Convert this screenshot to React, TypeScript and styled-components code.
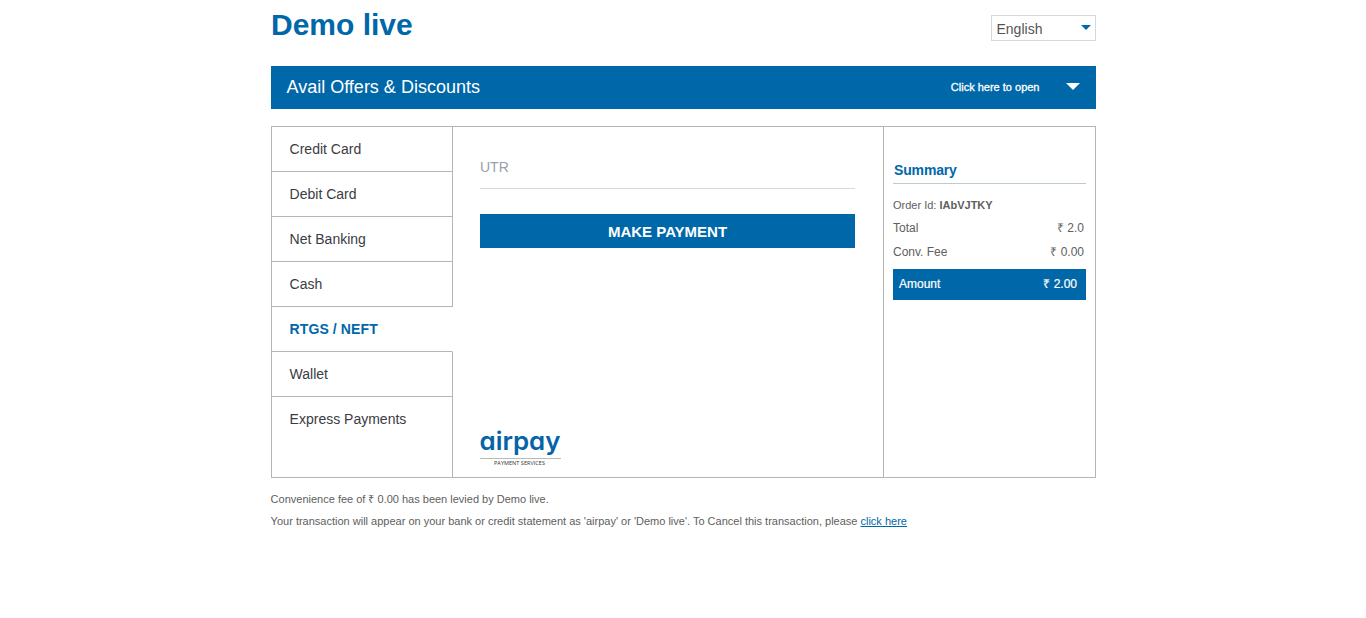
import React from "react";
import styled, { createGlobalStyle } from "styled-components";

const BLUE = "#0067a9";
const LINE = "#b5b5b5";

const Global = createGlobalStyle`
  *, *::before, *::after { box-sizing: border-box; }
  body { margin: 0; background: #fff; color: #606060; font-family: "Liberation Sans", Arial, sans-serif; }
`;

const Page = styled.main`
  width: 825px;
  margin-left: 271px;
`;

const Header = styled.header`
  display: flex;
  justify-content: space-between;
  align-items: flex-start;
  height: 66px;
`;

const Title = styled.h1`
  margin: 8px 0 0;
  font-size: 30px;
  line-height: 34px;
  font-weight: 700;
  color: ${BLUE};
`;

const Language = styled.div`
  display: flex;
  justify-content: space-between;
  width: 105px;
  height: 26px;
  margin-top: 15px;
  padding: 0 4px 0 4.5px;
  border: 1px solid #d0dbe1;
  font-size: 14px;
  line-height: 26px;
  color: #555;
`;

const Caret = styled.span<{ $w: number; $h: number; $top: number; $color: string }>`
  width: 0;
  height: 0;
  margin-top: ${(p) => p.$top}px;
  border-left: ${(p) => p.$w}px solid transparent;
  border-right: ${(p) => p.$w}px solid transparent;
  border-top: ${(p) => p.$h}px solid ${(p) => p.$color};
`;

const Offers = styled.section`
  display: flex;
  justify-content: space-between;
  height: 43px;
  padding: 0 16px 0 15.5px;
  background: ${BLUE};
  color: #fff;
  font-size: 18px;
  line-height: 42px;
`;

const OffersToggle = styled.div`
  display: flex;
  gap: 26.5px;
  font-size: 11px;
  -webkit-text-stroke: 0.3px #fff;
`;

const Panel = styled.section`
  display: grid;
  grid-template-columns: 181px 431px 1fr;
  height: 352px;
  margin-top: 17px;
  border: 1px solid ${LINE};
`;

const Tabs = styled.nav`
  display: flex;
  flex-direction: column;
`;

const Tab = styled.div<{ $active?: boolean; $last?: boolean }>`
  flex: ${(p) => (p.$last ? "1" : "0 0 45px")};
  padding-left: 17.6px;
  border-bottom: ${(p) => (p.$last ? "0" : `1px solid ${LINE}`)};
  border-right: 1px solid ${(p) => (p.$active ? "transparent" : LINE)};
  font-size: 14px;
  font-weight: ${(p) => (p.$active ? 700 : 400)};
  letter-spacing: ${(p) => (p.$active ? "0.1px" : "0")};
  line-height: 44px;
  color: ${(p) => (p.$active ? BLUE : "#3b3b43")};
`;

const Form = styled.div`
  display: flex;
  flex-direction: column;
  padding: 23px 28px 9px 27px;
  border-right: 1px solid ${LINE};
`;

const Field = styled.div`
  height: 39px;
  border-bottom: 1px solid #cfdae2;
  font-size: 14px;
  line-height: 35px;
  color: #97a0ad;
`;

const PayButton = styled.button`
  height: 34px;
  margin-top: 25px;
  padding: 1px 0 0;
  border: 0;
  background: ${BLUE};
  color: #fff;
  font: 700 15px/33px "Liberation Sans", Arial, sans-serif;
`;

const Logo = styled.svg`
  display: block;
  margin-top: auto;
`;

const Summary = styled.aside`
  padding: 34px 9px 0;
`;

const SummaryTitle = styled.h2`
  height: 23px;
  margin: 0 0 13px;
  padding-left: 1px;
  border-bottom: 1px solid #bccad3;
  font-size: 14px;
  line-height: 19px;
  letter-spacing: -0.15px;
  color: ${BLUE};
`;

const OrderId = styled.div`
  height: 19px;
  font-size: 11px;
  line-height: 16px;
`;

const Row = styled.div`
  display: flex;
  justify-content: space-between;
  height: 24px;
  padding-right: 2px;
  font-size: 12px;
  line-height: 24px;
`;

const Amount = styled.div`
  display: flex;
  justify-content: space-between;
  height: 31px;
  margin-top: 5px;
  padding: 0 9px 0 6px;
  background: ${BLUE};
  color: #fff;
  font-size: 12px;
  line-height: 30px;
  -webkit-text-stroke: 0.2px #fff;
`;

const Notes = styled.footer`
  padding-top: 10px;
  font-size: 11px;
  line-height: 22px;
`;

const Note = styled.p`
  margin: 0 0 0 -0.4px;
`;

const Cancel = styled.a`
  color: ${BLUE};
  text-decoration: underline;
`;

const methods = ["Credit Card", "Debit Card", "Net Banking", "Cash", "RTGS / NEFT", "Wallet", "Express Payments"];

export default function App() {
  return (
    <>
      <Global />
      <Page>
        <Header>
          <Title>Demo live</Title>
          <Language>
            English
            <Caret $w={5} $h={5} $top={9} $color={BLUE} />
          </Language>
        </Header>
        <Offers>
          <span>Avail Offers &amp; Discounts</span>
          <OffersToggle>
            Click here to open
            <Caret $w={7} $h={7} $top={17} $color="#fff" />
          </OffersToggle>
        </Offers>
        <Panel>
          <Tabs>
            {methods.map((m, i) => (
              <Tab key={m} $active={m === "RTGS / NEFT"} $last={i === methods.length - 1}>
                {m}
              </Tab>
            ))}
          </Tabs>
          <Form>
            <Field>UTR</Field>
            <PayButton>MAKE PAYMENT</PayButton>
            <Logo width="82" height="46" viewBox="0 0 82 46">
              <text
                x="-0.5"
                y="28"
                textLength="81"
                lengthAdjust="spacingAndGlyphs"
                fill="#0564a8"
                fontFamily="Inter, sans-serif"
                fontWeight="600"
                fontSize="25.5"
                style={{ fontFeatureSettings: '"cv11"' }}
              >
                airpay
              </text>
              <rect x="0" y="36" width="81" height="1" fill="#b9b9b9" />
              <text x="14" y="43" textLength="51" fill="#333" fontFamily="Open Sans, sans-serif" fontSize="5.5">
                PAYMENT SERVICES
              </text>
            </Logo>
          </Form>
          <Summary>
            <SummaryTitle>Summary</SummaryTitle>
            <OrderId>
              Order Id: <b>IAbVJTKY</b>
            </OrderId>
            <Row>
              <span>Total</span>
              <span>₹ 2.0</span>
            </Row>
            <Row>
              <span>Conv. Fee</span>
              <span>₹ 0.00</span>
            </Row>
            <Amount>
              <span>Amount</span>
              <span>₹ 2.00</span>
            </Amount>
          </Summary>
        </Panel>
        <Notes>
          <Note>Convenience fee of ₹ 0.00 has been levied by Demo live.</Note>
          <Note>
            Your transaction will appear on your bank or credit statement as 'airpay' or 'Demo live'. To Cancel this
            transaction, please <Cancel>click here</Cancel>
          </Note>
        </Notes>
      </Page>
    </>
  );
}
